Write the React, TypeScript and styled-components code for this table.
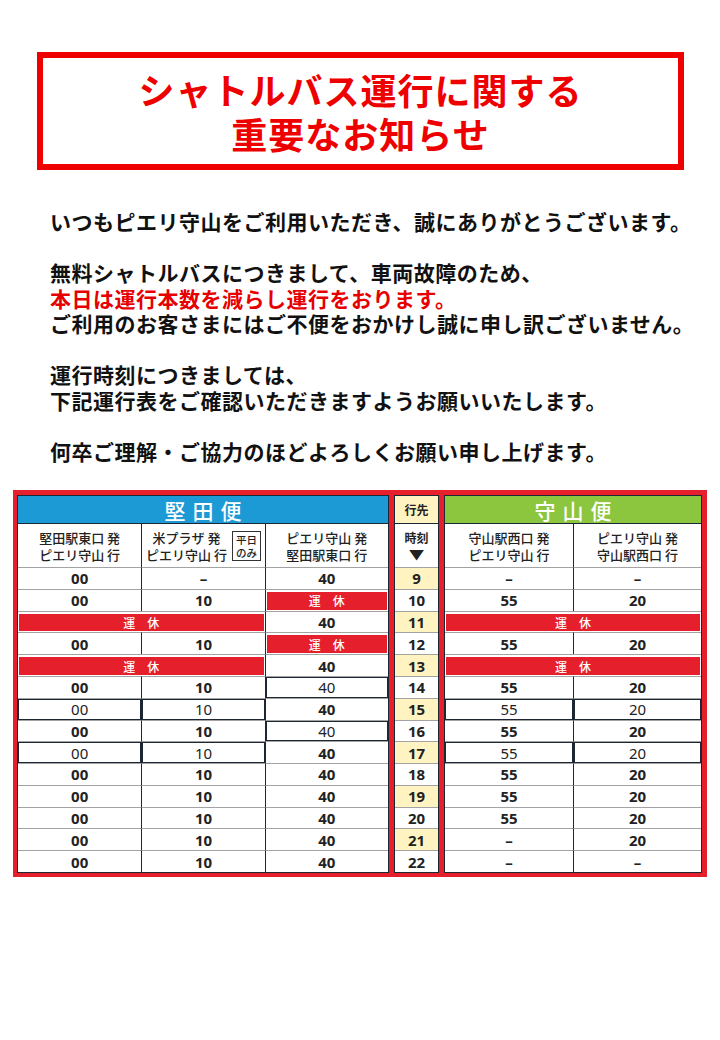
import React from "react";
import styled, { createGlobalStyle } from "styled-components";

const GlobalStyle = createGlobalStyle`
  html, body {
    margin: 0;
    padding: 0;
    background: #ffffff;
  }
  body {
    font-family: "Noto Sans CJK JP", "Noto Sans", sans-serif;
    color: #111;
  }
`;

const RED = "#e51f2b";
const LINE = "#1d2733";
const GRID = "#a3a3a3";
const YELLOW = "#fff4c1";

type Row = { hour: number; cells: string[] };

// "X" / "X2" = 運休 (span), "~" prefix = thin boxed cell
const kataRows: Row[] = [
  { hour: 9, cells: ["00", "–", "40"] },
  { hour: 10, cells: ["00", "10", "X"] },
  { hour: 11, cells: ["X2", "40"] },
  { hour: 12, cells: ["00", "10", "X"] },
  { hour: 13, cells: ["X2", "40"] },
  { hour: 14, cells: ["00", "10", "~40"] },
  { hour: 15, cells: ["~00", "~10", "40"] },
  { hour: 16, cells: ["00", "10", "~40"] },
  { hour: 17, cells: ["~00", "~10", "40"] },
  { hour: 18, cells: ["00", "10", "40"] },
  { hour: 19, cells: ["00", "10", "40"] },
  { hour: 20, cells: ["00", "10", "40"] },
  { hour: 21, cells: ["00", "10", "40"] },
  { hour: 22, cells: ["00", "10", "40"] },
];

const moriRows: Row[] = [
  { hour: 9, cells: ["–", "–"] },
  { hour: 10, cells: ["55", "20"] },
  { hour: 11, cells: ["X2"] },
  { hour: 12, cells: ["55", "20"] },
  { hour: 13, cells: ["X2"] },
  { hour: 14, cells: ["55", "20"] },
  { hour: 15, cells: ["~55", "~20"] },
  { hour: 16, cells: ["55", "20"] },
  { hour: 17, cells: ["~55", "~20"] },
  { hour: 18, cells: ["55", "20"] },
  { hour: 19, cells: ["55", "20"] },
  { hour: 20, cells: ["55", "20"] },
  { hour: 21, cells: ["–", "20"] },
  { hour: 22, cells: ["–", "–"] },
];

const Page = styled.div`
  width: 720px;
  padding-top: 52px;
`;

const TitleBox = styled.div`
  box-sizing: border-box;
  margin-left: 37px;
  width: 647px;
  height: 118px;
  border: 6px solid #ee0000;
  display: flex;
  flex-direction: column;
  align-items: center;
  justify-content: center;
`;

const TitleLine = styled.div`
  font-family: "Noto Sans CJK JP", sans-serif;
  font-weight: 700;
  font-size: 36px;
  line-height: 44px;
  color: #ee0000;
  letter-spacing: 1px;
`;

const Message = styled.div`
  margin-top: 39px;
  padding-left: 50px;
  font-family: "Noto Sans CJK JP", sans-serif;
  font-weight: 700;
  font-size: 21px;
  line-height: 25.5px;
  letter-spacing: 0.5px;
  color: #111;
  white-space: nowrap;
`;

const Para = styled.p`
  margin: 0 0 25.5px;
  &:last-child {
    margin-bottom: 0;
  }
`;

const Alert = styled.span`
  color: #e60000;
`;

const Frame = styled.div`
  box-sizing: border-box;
  margin: 26px 0 0 13px;
  width: 694px;
  background: ${RED};
  padding: 5px 5px 4px 4px;
  display: flex;
  gap: 5px;
`;

const Panel = styled.div<{ $cols: number; $w: number }>`
  box-sizing: border-box;
  width: ${(p) => p.$w}px;
  height: 378px;
  border: 1px solid ${LINE};
  background: #fff;
  display: grid;
  grid-template-columns: repeat(${(p) => p.$cols}, 1fr);
  grid-template-rows: 27px 44px repeat(14, 1fr);
`;

const RouteHead = styled.div<{ $bg: string }>`
  grid-column: 1 / -1;
  background: ${(p) => p.$bg};
  color: #fff;
  display: flex;
  align-items: center;
  justify-content: center;
  font-family: "Noto Sans CJK JP", sans-serif;
  font-weight: 500;
  font-size: 21px;
  letter-spacing: 7px;
  padding-left: 7px;
`;

const SubHead = styled.div<{ $first?: boolean }>`
  border-top: 1px solid ${LINE};
  border-left: ${(p) => (p.$first ? "none" : `1px solid ${LINE}`)};
  display: flex;
  align-items: center;
  justify-content: center;
  text-align: center;
  font-family: "Noto Sans CJK JP", sans-serif;
  font-weight: 500;
  font-size: 13px;
  line-height: 17px;
  color: #222;
`;

const Note = styled.span`
  margin-left: 5px;
  border: 1px solid #333;
  padding: 1px 3px;
  font-size: 10.5px;
  line-height: 13px;
  font-weight: 500;
`;

const Cell = styled.div<{ $first?: boolean; $thin?: boolean; $span?: number }>`
  grid-column: span ${(p) => p.$span ?? 1};
  border-top: 1px solid ${GRID};
  border-left: ${(p) => (p.$first ? "none" : `1px solid ${LINE}`)};
  display: flex;
  align-items: center;
  justify-content: center;
  font-family: "Noto Sans", "Liberation Sans", sans-serif;
  font-weight: ${(p) => (p.$thin ? 400 : 700)};
  font-size: 15px;
  color: #222;
  box-shadow: ${(p) => (p.$thin ? `inset 0 0 0 1px ${LINE}` : "none")};
`;

const OffCell = styled.div<{ $first?: boolean; $span?: number }>`
  grid-column: span ${(p) => p.$span ?? 1};
  border-top: 1px solid ${GRID};
  border-left: ${(p) => (p.$first ? "none" : `1px solid ${LINE}`)};
  padding: 2px 1px 1px;
  display: flex;
`;

const OffBar = styled.div`
  flex: 1;
  background: ${RED};
  color: #fff;
  display: flex;
  align-items: center;
  justify-content: center;
  font-family: "Noto Sans CJK JP", sans-serif;
  font-weight: 500;
  font-size: 12px;
`;

const MidHead = styled.div`
  background: ${YELLOW};
  display: flex;
  align-items: center;
  justify-content: center;
  font-family: "Noto Sans CJK JP", sans-serif;
  font-weight: 700;
  font-size: 12px;
  color: #222;
`;

const MidSub = styled.div`
  border-top: 1px solid ${LINE};
  display: flex;
  flex-direction: column;
  align-items: center;
  justify-content: center;
  font-family: "Noto Sans CJK JP", sans-serif;
  font-weight: 700;
  font-size: 12px;
  line-height: 16px;
  color: #222;
`;

const Arrow = styled.span`
  font-size: 13px;
  line-height: 15px;
  transform: scaleX(1.2);
`;

const Hour = styled.div<{ $odd: boolean }>`
  border-top: 1px solid ${GRID};
  background: ${(p) => (p.$odd ? YELLOW : "#fff")};
  display: flex;
  align-items: center;
  justify-content: center;
  font-family: "Noto Sans", "Liberation Sans", sans-serif;
  font-weight: 700;
  font-size: 15px;
  color: #222;
`;

const renderCells = (rows: Row[]) =>
  rows.flatMap((row) => {
    let col = 0;
    return row.cells.map((raw, i) => {
      const first = col === 0;
      const key = `${row.hour}-${i}`;
      if (raw.startsWith("X")) {
        const span = raw === "X2" ? 2 : 1;
        col += span;
        return (
          <OffCell key={key} $first={first} $span={span}>
            <OffBar>運　休</OffBar>
          </OffCell>
        );
      }
      col += 1;
      const thin = raw.startsWith("~");
      return (
        <Cell key={key} $first={first} $thin={thin}>
          {thin ? raw.slice(1) : raw}
        </Cell>
      );
    });
  });

export default function App() {
  return (
    <Page>
      <GlobalStyle />
      <TitleBox>
        <TitleLine>シャトルバス運行に関する</TitleLine>
        <TitleLine>重要なお知らせ</TitleLine>
      </TitleBox>

      <Message>
        <Para>いつもピエリ守山をご利用いただき、誠にありがとうございます。</Para>
        <Para>
          無料シャトルバスにつきまして、車両故障のため、
          <br />
          <Alert>本日は運行本数を減らし運行をおります。</Alert>
          <br />
          ご利用のお客さまにはご不便をおかけし誠に申し訳ございません。
        </Para>
        <Para>
          運行時刻につきましては、
          <br />
          下記運行表をご確認いただきますようお願いいたします。
        </Para>
        <Para>何卒ご理解・ご協力のほどよろしくお願い申し上げます。</Para>
      </Message>

      <Frame>
        <Panel $cols={3} $w={372}>
          <RouteHead $bg="#1c9ad6">堅田便</RouteHead>
          <SubHead $first>
            堅田駅東口 発
            <br />
            ピエリ守山 行
          </SubHead>
          <SubHead>
            <span>
              米プラザ 発
              <br />
              ピエリ守山 行
            </span>
            <Note>
              平日
              <br />
              のみ
            </Note>
          </SubHead>
          <SubHead>
            ピエリ守山 発
            <br />
            堅田駅東口 行
          </SubHead>
          {renderCells(kataRows)}
        </Panel>

        <Panel $cols={1} $w={45}>
          <MidHead>行先</MidHead>
          <MidSub>
            時刻
            <Arrow>▼</Arrow>
          </MidSub>
          {kataRows.map((r) => (
            <Hour key={r.hour} $odd={r.hour % 2 === 1}>
              {r.hour}
            </Hour>
          ))}
        </Panel>

        <Panel $cols={2} $w={258}>
          <RouteHead $bg="#8cc63f">守山便</RouteHead>
          <SubHead $first>
            守山駅西口 発
            <br />
            ピエリ守山 行
          </SubHead>
          <SubHead>
            ピエリ守山 発
            <br />
            守山駅西口 行
          </SubHead>
          {renderCells(moriRows)}
        </Panel>
      </Frame>
    </Page>
  );
}
